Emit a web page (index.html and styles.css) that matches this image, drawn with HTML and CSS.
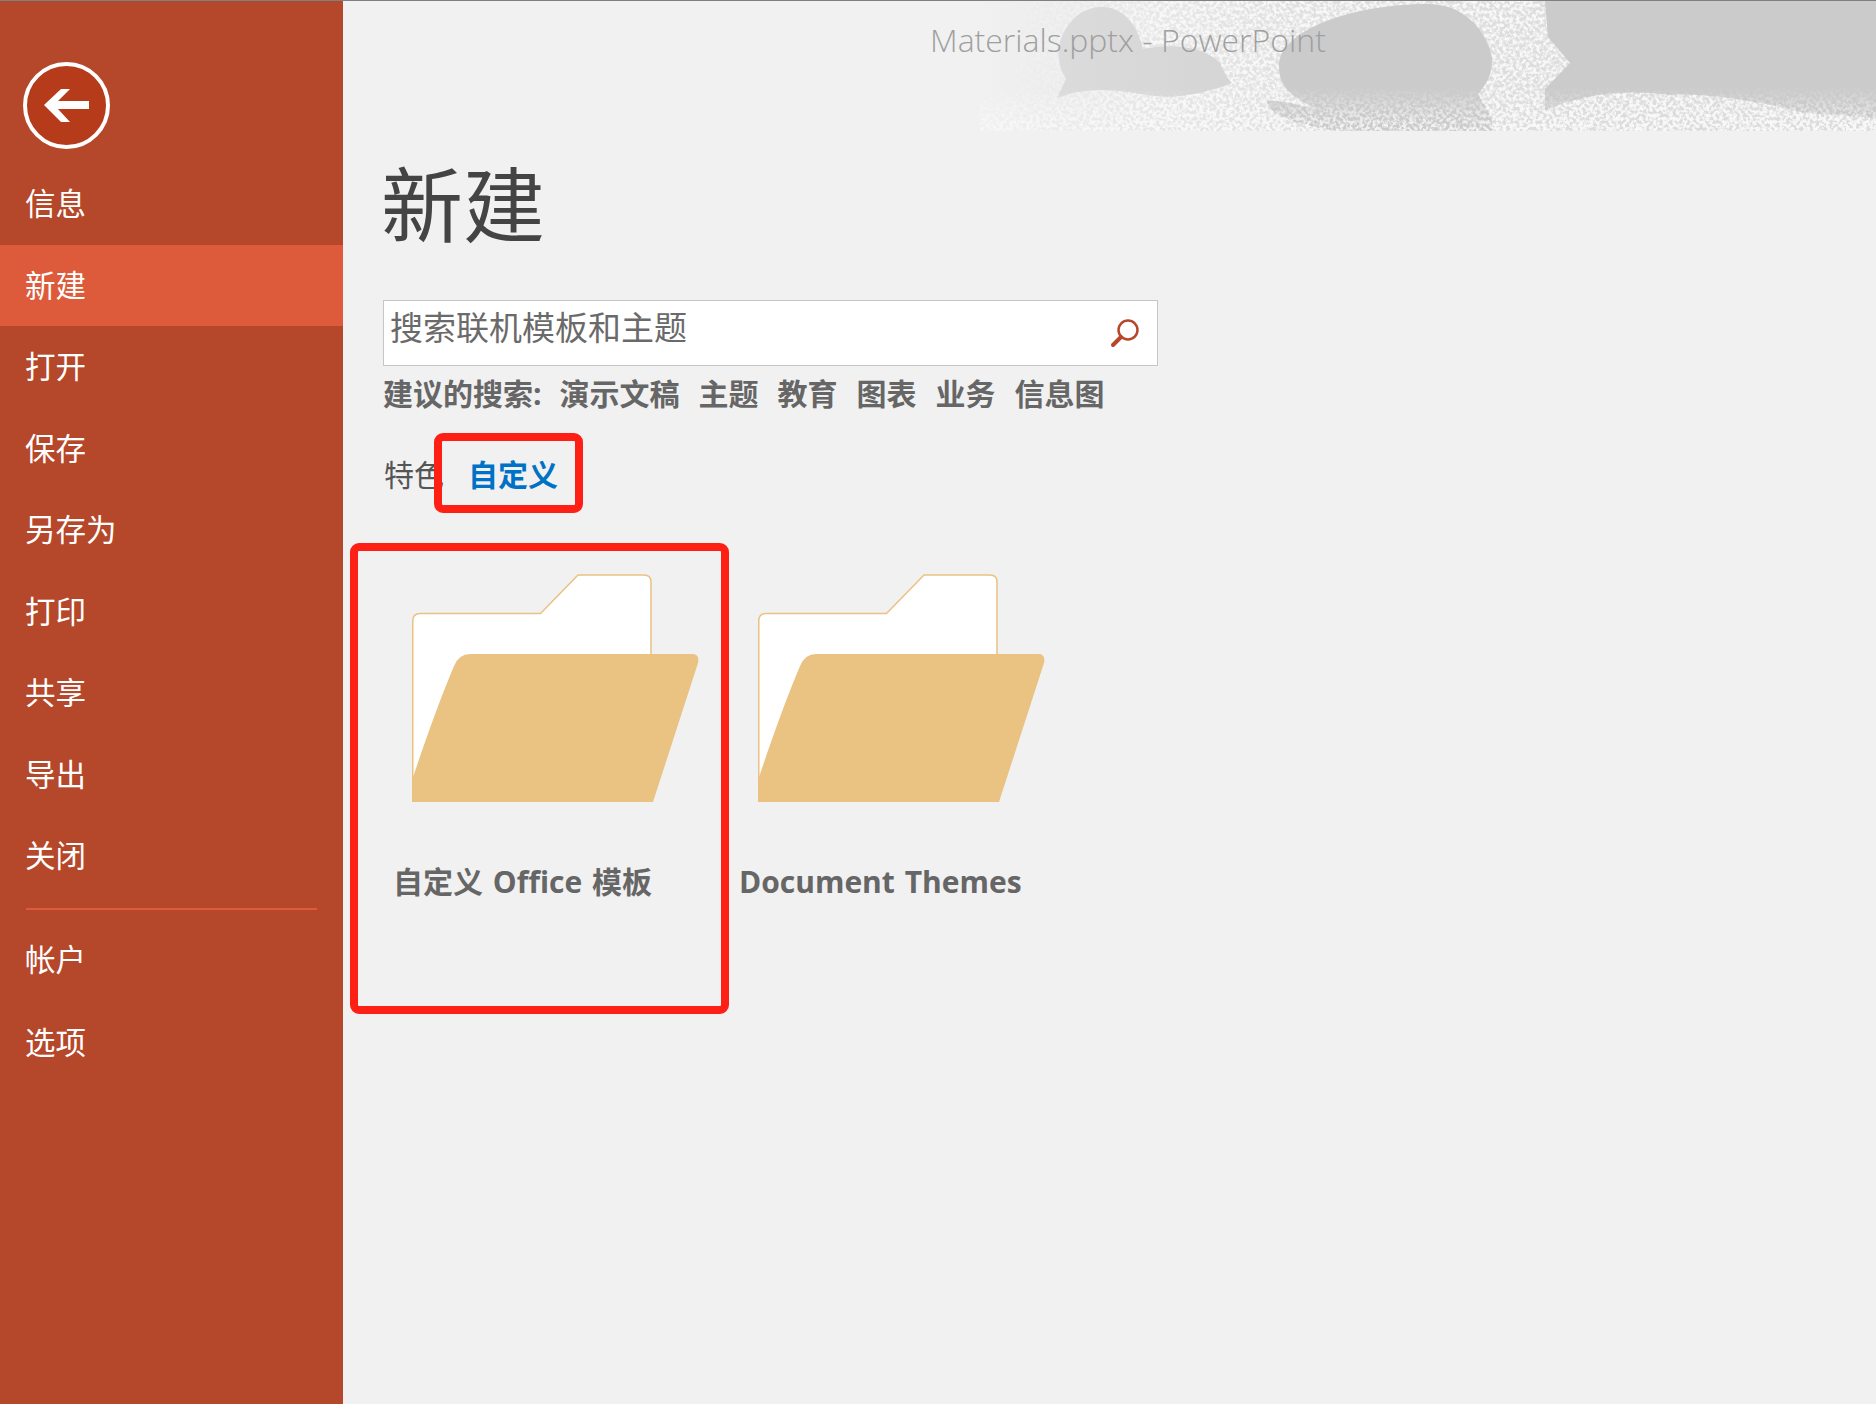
FILE: index.html
```html
<!DOCTYPE html>
<html lang="zh-CN">
<head>
    <meta charset="UTF-8">
    <title>Materials.pptx - PowerPoint</title>
    <link rel="stylesheet" href="styles.css">
</head>
<body>
    <div class="app">
        <!-- Backstage menu -->
        <aside class="sidebar">
            <svg class="back" viewBox="0 0 87 87">
                <circle cx="43.5" cy="43.5" r="41.5" fill="#b53b1b" stroke="#fff" stroke-width="4"/>
                <polygon fill="#fff" points="21,43 38,27 47,27 35,39 66,39 66,47 35,47 47,60 38,60"/>
            </svg>
            <nav class="menu">
                <a class="menu-item">信息</a>
                <a class="menu-item active">新建</a>
                <a class="menu-item">打开</a>
                <a class="menu-item">保存</a>
                <a class="menu-item">另存为</a>
                <a class="menu-item">打印</a>
                <a class="menu-item">共享</a>
                <a class="menu-item">导出</a>
                <a class="menu-item">关闭</a>
                <div class="menu-line"></div>
                <a class="menu-item">帐户</a>
                <a class="menu-item">选项</a>
            </nav>
        </aside>

        <main class="content">
            <header class="titlebar">
                <svg class="banner" viewBox="0 0 896 130" preserveAspectRatio="none">
                    <defs>
                        <linearGradient id="baseFade" x1="0" x2="1" y1="0" y2="0">
                            <stop offset="0" stop-color="#f1f1f1"/>
                            <stop offset="0.1" stop-color="#ebebeb"/>
                            <stop offset="0.35" stop-color="#e0e0e0"/>
                            <stop offset="0.7" stop-color="#dcdcdc"/>
                        </linearGradient>
                        <linearGradient id="blobFade" x1="0" x2="1" y1="0" y2="0">
                            <stop offset="0" stop-color="#dbdbdb"/>
                            <stop offset="1" stop-color="#d5d5d5"/>
                        </linearGradient>
                        <linearGradient id="bottomFade" x1="0" x2="0" y1="0" y2="1">
                            <stop offset="0.66" stop-color="#000"/>
                            <stop offset="0.95" stop-color="#ddd"/>
                        </linearGradient>
                        <linearGradient id="leftFade" x1="0" x2="1" y1="0" y2="0">
                            <stop offset="0.01" stop-color="#000"/>
                            <stop offset="0.2" stop-color="#fff"/>
                        </linearGradient>
                        <mask id="specksLeft"><rect width="896" height="130" fill="url(#leftFade)"/></mask>
                        <mask id="specksBottom"><rect width="896" height="130" fill="url(#bottomFade)"/></mask>
                        <filter id="specks" x="0" y="0" width="100%" height="100%">
                            <feTurbulence type="fractalNoise" baseFrequency="0.3" numOctaves="2" seed="7"/>
                            <feColorMatrix values="0 0 0 0 0.94  0 0 0 0 0.94  0 0 0 0 0.94  4 0 0 0 -1.55"/>
                            <feGaussianBlur stdDeviation="0.5"/>
                        </filter>
                        <filter id="soft" x="-5%" y="-5%" width="110%" height="110%">
                            <feGaussianBlur stdDeviation="0.7"/>
                        </filter>
                    </defs>
                    <rect width="896" height="130" fill="url(#baseFade)"/>
                    <rect width="896" height="130" filter="url(#specks)" mask="url(#specksLeft)"/>
                    <g filter="url(#soft)">
                        <path fill="url(#blobFade)" d="M77,97 L86,78 C78,65 76,50 82,35 C92,12 110,5 125,6 C145,8 158,25 163,48 C190,42 225,45 240,62 C244,70 246,76 252,82 C225,92 200,98 175,95 C150,92 115,82 77,97 Z"/>
                        <path fill="#cbcbcb" d="M299,65 C299,30 370,3 449,3 C490,3 512,40 512,60 C512,75 505,85 498,93 L512,118 L512,130 L360,130 C320,125 288,115 287,100 C300,98 320,105 335,107 C310,95 299,85 299,65 Z"/>
                        <path fill="#cbcbcb" d="M565,0 H896 V118 C860,112 830,116 800,106 C760,98 720,92 690,94 C650,88 600,92 565,110 V88 L590,62 L568,36 Z"/>
                    </g>
                    <rect width="896" height="130" filter="url(#specks)" mask="url(#specksBottom)"/>
                </svg>
                <span class="doc-title">Materials.pptx - PowerPoint</span>
            </header>

            <h1 class="page-title">新建</h1>

            <div class="search">
                <span class="search-text">搜索联机模板和主题</span>
                <svg class="search-icon" viewBox="0 0 30 30">
                    <circle cx="18" cy="11" r="9.5" fill="none" stroke="#b7472a" stroke-width="2.5"/>
                    <line x1="11" y1="18" x2="3" y2="26" stroke="#b7472a" stroke-width="4" stroke-linecap="round"/>
                </svg>
            </div>

            <div class="suggest">
                <span class="suggest-lead">建议的搜索:</span>
                <span>演示文稿</span>
                <span>主题</span>
                <span>教育</span>
                <span>图表</span>
                <span>业务</span>
                <span>信息图</span>
            </div>

            <div class="tabs">
                <span class="tab">特色</span>
                <span class="tab tab-on">自定义<i class="mark mark-tab"></i></span>
            </div>

            <div class="cards">
                <div class="card">
                    <svg class="folder" viewBox="0 0 288 228">
                        <path fill="#fff" stroke="#eac282" stroke-width="1.5" d="M.75,227 V47 Q.75,39.5 8,39.5 H128.5 L166,1 H232 Q239,1 239,8 V100 L100,227 Z"/>
                        <path fill="#eac282" d="M0,206 C14,165 28,125 42,92 Q47,80 58,80 H280 Q288,80 286,89 L241,228 H0 Z"/>
                    </svg>
                    <div class="card-name">自定义 Office 模板</div>
                    <i class="mark mark-card"></i>
                </div>
                <div class="card">
                    <svg class="folder" viewBox="0 0 288 228">
                        <path fill="#fff" stroke="#eac282" stroke-width="1.5" d="M.75,227 V47 Q.75,39.5 8,39.5 H128.5 L166,1 H232 Q239,1 239,8 V100 L100,227 Z"/>
                        <path fill="#eac282" d="M0,206 C14,165 28,125 42,92 Q47,80 58,80 H280 Q288,80 286,89 L241,228 H0 Z"/>
                    </svg>
                    <div class="card-name">Document Themes</div>
                </div>
            </div>
        </main>
    </div>
</body>
</html>
```

FILE: styles.css
```css
* {
    box-sizing: border-box;
}

html, body {
    margin: 0;
    height: 100%;
    overflow: hidden;
}

body {
    font-family: "Open Sans", "Noto Sans CJK SC", sans-serif;
    background-color: #f1f1f1;
    border-top: 1px solid #808080;
    color: #555;
}

.app {
    display: flex;
    height: 1403px;
}

/* Sidebar */
.sidebar {
    width: 343px;
    flex-shrink: 0;
    background-color: #b5472a;
    color: #fff;
}

.back {
    display: block;
    width: 87px;
    height: 87px;
    margin: 61px 0 14px 23px;
}

.menu-item {
    display: block;
    height: 81.5px;
    padding-left: 25px;
    font-size: 30.5px;
    line-height: 81.5px;
}

.menu-item:last-child {
    margin-top: 2px;
}

.menu-item.active {
    background-color: #dd5b3a;
}

.menu-line {
    height: 2px;
    margin: 11px 26px 9px;
    background-color: #dd5b3a;
}

/* Main area */
.content {
    flex: 1;
    padding-left: 40px;
}

.titlebar {
    position: relative;
    height: 130px;
    margin-left: -40px;
    padding: 16px 0 0 587px;
}

.banner {
    position: absolute;
    top: 0;
    right: 0;
    width: 896px;
    height: 130px;
}

.doc-title {
    position: relative;
    font-size: 32px;
    font-weight: 300;
    line-height: 46px;
    color: #9f9f9f;
}

.page-title {
    height: 100px;
    margin: 23px 0 0 -2px;
    font-size: 82px;
    font-weight: 400;
    line-height: 100px;
    color: #444;
}

.search {
    display: flex;
    justify-content: space-between;
    width: 775px;
    height: 66px;
    margin-top: 46px;
    padding: 4px 17px 0 6px;
    background-color: #fff;
    border: 1px solid #c6c6c6;
}

.search-text {
    font-size: 33px;
    line-height: 46px;
    color: #6a6a6a;
}

.search-icon {
    width: 30px;
    height: 30px;
    margin-top: 14px;
}

.suggest {
    display: flex;
    gap: 19px;
    height: 40px;
    margin-top: 8px;
    font-size: 30px;
    font-weight: 700;
    line-height: 40px;
    color: #666;
}

.suggest-lead {
    margin-right: -1px;
}

.tabs {
    display: flex;
    gap: 24px;
    height: 40px;
    margin-top: 41px;
    padding-left: 1px;
    font-size: 30px;
    line-height: 40px;
}

.tab {
    position: relative;
}

.tab-on {
    font-weight: 700;
    color: #0072c6;
}

/* Folder cards */
.cards {
    display: flex;
    margin-top: 79px;
}

.card {
    position: relative;
    width: 346px;
}

.folder {
    display: block;
    width: 288px;
    height: 228px;
    margin-left: 29px;
}

.card-name {
    height: 40px;
    margin: 60px 0 0 10px;
    font-size: 30px;
    font-weight: 700;
    line-height: 40px;
    word-spacing: 2px;
    color: #666;
    white-space: nowrap;
}

/* Red annotation boxes */
.mark {
    position: absolute;
    border: 8px solid #ff2015;
    border-radius: 9px;
}

.mark-tab {
    top: -22px;
    left: -34px;
    width: 149px;
    height: 80px;
}

.mark-card {
    top: -31px;
    left: -33px;
    width: 379px;
    height: 471px;
}
```
